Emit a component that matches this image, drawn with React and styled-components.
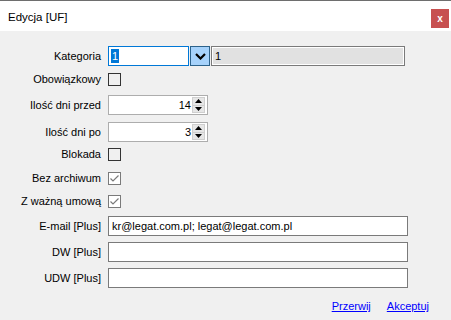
import React from 'react'
import styled, { createGlobalStyle } from 'styled-components'

const Global = createGlobalStyle`
    html, body {
        margin: 0;
        padding: 0;
        background: #f0f0f0;
    }
    body {
        font-family: "Liberation Sans", Arial, sans-serif;
        font-size: 11px;
        color: #000;
    }
`

const Window = styled.div`
    width: 451px;
    height: 320px;
    display: flex;
    flex-direction: column;
    background: #f0f0f0;
    overflow: hidden;
`

const TitleBar = styled.div`
    height: 30px;
    border-top: 1px solid #6e6e6e;
    background: #fff;
    display: flex;
    align-items: center;
    justify-content: space-between;
    padding: 0 2px 0 8px;
`

const Title = styled.div`
    font-size: 11.5px;
    margin-top: 1px;
`

const CloseButton = styled.div`
    width: 18px;
    height: 19px;
    margin-top: 5px;
    background: #c75050;
    color: #fff;
    font-weight: bold;
    font-size: 10px;
    display: flex;
    align-items: center;
    justify-content: center;
`

const Body = styled.div`
    flex: 1;
    padding-top: 15px;
    display: flex;
    flex-direction: column;
`

const Row = styled.div`
    display: grid;
    grid-template-columns: 101px auto;
    column-gap: 7px;
    align-items: center;
    height: 20px;
    margin-top: ${p => p.gap || 0}px;
`

const Label = styled.div`
    text-align: right;
    white-space: nowrap;
`

const Controls = styled.div`
    display: flex;
    align-items: center;
    height: 20px;
`

const ComboInput = styled.div`
    box-sizing: border-box;
    width: 81px;
    height: 20px;
    border: 1px solid #0078d7;
    background: #fff;
    padding: 2px 0 0 2px;
`

const Selected = styled.span`
    background: #0078d7;
    color: #fff;
    padding: 0 1px;
    display: inline-block;
    line-height: 14px;
`

const DropButton = styled.div`
    box-sizing: border-box;
    width: 20px;
    height: 20px;
    margin-left: 1px;
    border: 1px solid #2c628b;
    background: #a6d2fb;
    display: flex;
    align-items: center;
    justify-content: center;
`

const ReadOnlyField = styled.div`
    box-sizing: border-box;
    width: 194px;
    height: 20px;
    margin-left: 1px;
    border: 1px solid #7a7a7a;
    box-shadow: inset 0 0 0 1px #fff;
    background: #e1e1e1;
    padding: 3px 0 0 3px;
`

const Checkbox = styled.div`
    box-sizing: border-box;
    width: 13px;
    height: 13px;
    border: 1px solid ${p => (p.checked ? '#7a7a7a' : '#333')};
    background: ${p => (p.checked ? '#fff' : 'transparent')};
    display: flex;
    align-items: center;
    justify-content: center;
`

const Spinner = styled.div`
    box-sizing: border-box;
    width: 100px;
    height: 20px;
    border: 1px solid #adadad;
    background: #fff;
    display: flex;
    align-items: center;
    justify-content: flex-end;
    padding-right: 2px;
`

const SpinValue = styled.div`
    padding-right: 1px;
`

const SpinButtons = styled.div`
    width: 13px;
    height: 16px;
    display: flex;
    flex-direction: column;
`

const SpinHalf = styled.div`
    flex: 1;
    background: #e6e6e6;
    border: 1px solid #cfcfcf;
    display: flex;
    align-items: center;
    justify-content: center;
    & + & {
        border-top: none;
    }
`

const TextBox = styled.div`
    box-sizing: border-box;
    width: 300px;
    height: 20px;
    border: 1px solid #7a7a7a;
    background: #fff;
    padding: 3px 0 0 3px;
    white-space: nowrap;
`

const Footer = styled.div`
    display: flex;
    justify-content: flex-end;
    gap: 16px;
    padding-right: 22px;
    margin-top: 12px;
`

const Link = styled.a`
    color: #0000ff;
    text-decoration: underline;
    cursor: pointer;
`

const Chevron = () => (
    <svg width="11" height="7" viewBox="0 0 11 7">
        <polyline points="1,1 5.5,5.5 10,1" fill="none" stroke="#000" strokeWidth="2.2" />
    </svg>
)

const Check = () => (
    <svg width="11" height="11" viewBox="0 0 11 11">
        <polyline points="1.5,5.5 4,8 9.5,2.5" fill="none" stroke="#7a7a7a" strokeWidth="1.2" />
    </svg>
)

const Arrow = ({ up }) => (
    <svg width="7" height="4" viewBox="0 0 7 4">
        <polygon points={up ? '0,4 7,4 3.5,0' : '0,0 7,0 3.5,4'} fill="#000" />
    </svg>
)

const Spin = ({ value }) => (
    <Spinner>
        <SpinValue>{value}</SpinValue>
        <SpinButtons>
            <SpinHalf><Arrow up /></SpinHalf>
            <SpinHalf><Arrow /></SpinHalf>
        </SpinButtons>
    </Spinner>
)

const CheckRow = ({ label, checked, gap }) => (
    <Row gap={gap}>
        <Label>{label}</Label>
        <Controls>
            <Checkbox checked={checked}>{checked && <Check />}</Checkbox>
        </Controls>
    </Row>
)

const App = () => {
    return (
        <Window>
            <Global />
            <TitleBar>
                <Title>Edycja [UF]</Title>
                <CloseButton>x</CloseButton>
            </TitleBar>
            <Body>
                <Row>
                    <Label>Kategoria</Label>
                    <Controls>
                        <ComboInput><Selected>1</Selected></ComboInput>
                        <DropButton><Chevron /></DropButton>
                        <ReadOnlyField>1</ReadOnlyField>
                    </Controls>
                </Row>
                <CheckRow label="Obowiązkowy" gap={3} />
                <Row gap={6}>
                    <Label>Ilość dni przed</Label>
                    <Controls><Spin value="14" /></Controls>
                </Row>
                <Row gap={7}>
                    <Label>Ilość dni po</Label>
                    <Controls><Spin value="3" /></Controls>
                </Row>
                <CheckRow label="Blokada" gap={2} />
                <CheckRow label="Bez archiwum" checked gap={4} />
                <CheckRow label="Z ważną umową" checked gap={3} />
                <Row gap={5}>
                    <Label>E-mail [Plus]</Label>
                    <Controls><TextBox>kr@legat.com.pl; legat@legat.com.pl</TextBox></Controls>
                </Row>
                <Row gap={6}>
                    <Label>DW [Plus]</Label>
                    <Controls><TextBox /></Controls>
                </Row>
                <Row gap={6}>
                    <Label>UDW [Plus]</Label>
                    <Controls><TextBox /></Controls>
                </Row>
                <Footer>
                    <Link>Przerwij</Link>
                    <Link>Akceptuj</Link>
                </Footer>
            </Body>
        </Window>
    )
}

export default App
